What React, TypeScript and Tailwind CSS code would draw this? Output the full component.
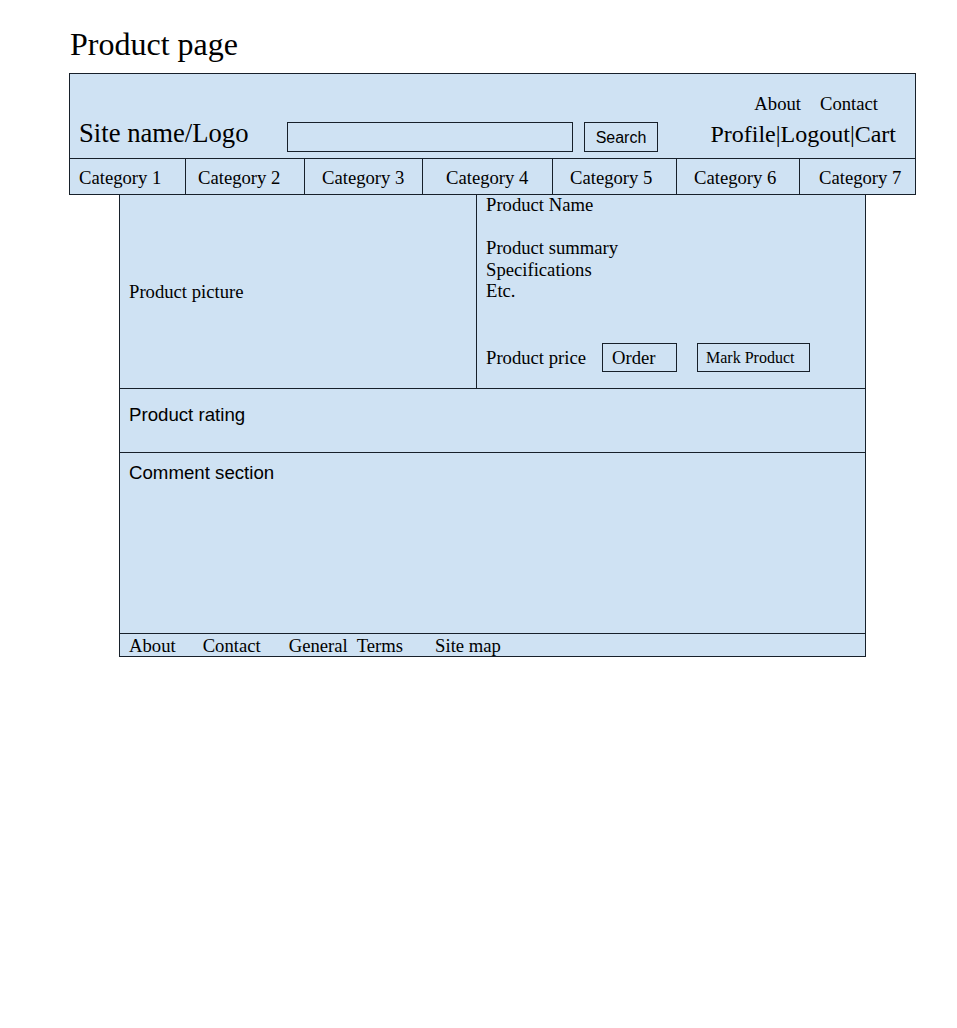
import React from 'react';

const categories = [
  { label: 'Category 1', cls: 'w-[116px] border-r border-[#17202a] pl-[9px]' },
  { label: 'Category 2', cls: 'w-[119px] border-r border-[#17202a] pl-[12px]' },
  { label: 'Category 3', cls: 'w-[118px] border-r border-[#17202a] pl-[17px]' },
  { label: 'Category 4', cls: 'w-[130px] border-r border-[#17202a] pl-[23px]' },
  { label: 'Category 5', cls: 'w-[124px] border-r border-[#17202a] pl-[17px]' },
  { label: 'Category 6', cls: 'w-[123px] border-r border-[#17202a] pl-[17px]' },
  { label: 'Category 7', cls: 'w-[115px] pl-[19px]' },
];

export default function App() {
  return (
    <div className="min-h-[1028px] bg-white font-['Liberation_Serif',serif] text-black">
      <div className="pl-[69px] pt-[28px]">
        <h1 className="mb-[13px] pl-px text-[32px] leading-none">Product page</h1>

        {/* Header + categories */}
        <div className="w-[847px] border border-[#17202a] bg-[#cfe2f3]">
          <div className="flex h-[84px] items-end pb-[6px] pl-[9px]">
            <div className="mb-[5px] w-[208px] shrink-0 text-[26.67px] leading-none">Site name/Logo</div>
            <input
              className="h-[30px] w-[286px] border border-[#17202a] bg-transparent outline-none"
              aria-label="Search"
            />
            <button className="ml-[11px] h-[30px] w-[74px] border border-[#17202a] pt-px font-['Liberation_Sans',sans-serif] text-[16px] leading-none">
              Search
            </button>
            <div className="mb-[6px] ml-auto mr-[19px] flex flex-col items-end">
              <div className="mb-[8px] mr-[18px] flex gap-[19px] text-[18.67px] leading-none">
                <span>About</span>
                <span>Contact</span>
              </div>
              <div className="text-[24px] leading-none">Profile|Logout|Cart</div>
            </div>
          </div>
          <div className="flex h-[36px] border-t border-[#17202a] text-[18.67px] leading-none">
            {categories.map((c) => (
              <div key={c.label} className={`flex items-center pt-[4px] ${c.cls}`}>
                {c.label}
              </div>
            ))}
          </div>
        </div>

        {/* Main content */}
        <div className="ml-[50px] w-[747px] border-x border-b border-[#17202a] bg-[#cfe2f3]">
          <div className="flex h-[194px] border-b border-[#17202a]">
            <div className="flex w-[357px] items-center border-r border-[#17202a] pl-[9px] text-[18.67px]">
              Product picture
            </div>
            <div className="-mt-px flex flex-1 flex-col pb-[16px] pl-[9px] text-[18.67px] leading-[21.5px]">
              <div>Product Name</div>
              <div className="h-[21.5px]" />
              <div>Product summary</div>
              <div>Specifications</div>
              <div>Etc.</div>
              <div className="mt-auto flex items-center">
                <span>Product price</span>
                <div className="ml-[16px] flex h-[29px] w-[75px] items-center border border-[#17202a] pl-[9px]">Order</div>
                <div className="ml-[20px] flex h-[29px] w-[113px] items-center border border-[#17202a] pl-[8px] text-[16px]">
                  Mark Product
                </div>
              </div>
            </div>
          </div>

          <div className="h-[64px] border-b border-[#17202a] pl-[9px] pt-[17px] font-['Liberation_Sans',sans-serif] text-[18.67px] leading-none">
            Product rating
          </div>

          <div className="h-[181px] border-b border-[#17202a] pl-[9px] pt-[11px] font-['Liberation_Sans',sans-serif] text-[18.67px] leading-none">
            Comment section
          </div>

          <div className="flex h-[22px] pl-[9px] pt-[3px] text-[18.67px] leading-none">
            <span>About</span>
            <span className="ml-[27px]">Contact</span>
            <span className="ml-[28px]">General</span>
            <span className="ml-[9px]">Terms</span>
            <span className="ml-[32px]">Site map</span>
          </div>
        </div>
      </div>
    </div>
  );
}
